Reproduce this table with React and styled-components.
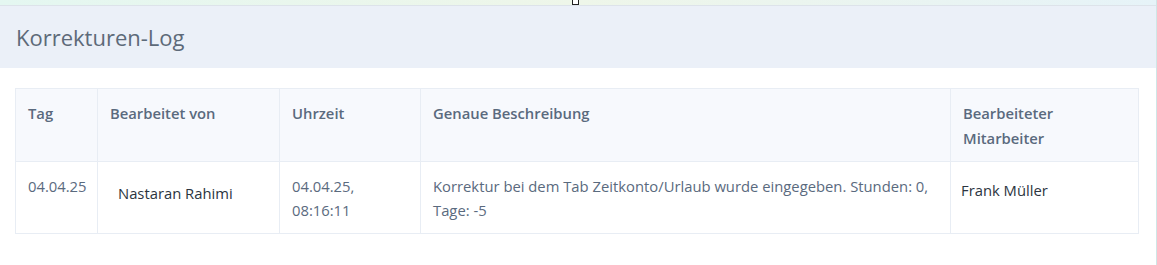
import React from "react"
import styled, { createGlobalStyle } from "styled-components"

const GlobalStyle = createGlobalStyle`
  body {
    margin: 0;
    background: #ffffff;
    font-family: "Open Sans", "Liberation Sans", sans-serif;
  }
`

const Page = styled.div`
  width: 1156px;
  height: 265px;
  border-right: 1px solid #cfe6e6;
  background: #ffffff;
`

const TopStrip = styled.div`
  position: relative;
  height: 5px;
  border-bottom: 1px solid #dde3ea;
  background: linear-gradient(90deg, #e4f7f1 0%, #eef6e9 50%, #e6f3f8 100%);
`

const Handle = styled.span`
  position: absolute;
  left: 572px;
  top: -2px;
  width: 5px;
  height: 5px;
  border: 1px solid #222;
  background: #fff;
`

const Header = styled.header`
  height: 62px;
  background: #ebf0f8;
  display: flex;
  align-items: center;
  padding: 0 16px;
`

const Title = styled.h1`
  margin: 0;
  font-size: 22px;
  font-weight: 400;
  color: #5d6a79;
`

const Content = styled.div`
  padding: 20px 18px 0 15px;
`

const Table = styled.table`
  width: 1123px;
  border-collapse: collapse;
  table-layout: fixed;
  font-size: 14.8px;
`

const Th = styled.th`
  box-sizing: border-box;
  width: ${({ $w }) => $w}px;
  background: #f7f9fd;
  border: 1px solid #e8edf4;
  padding: 12px 12px 10px 12px;
  text-align: left;
  vertical-align: top;
  font-weight: 600;
  color: #5a6a7e;
  line-height: 25px;
  height: 71px;
`

const Td = styled.td`
  box-sizing: border-box;
  border: 1px solid #e8edf4;
  padding: 12px 12px 11px 12px;
  vertical-align: top;
  color: #5a6a7e;
  line-height: 24px;
  height: 72px;
`

const Name = styled.span`
  display: inline-block;
  padding: ${({ $inset }) => ($inset ? "7px 0 0 8px" : "4px 0 0 0")};
  margin-left: ${({ $inset }) => ($inset ? "0" : "-2px")};
  color: #2b3440;
`

const App = () => (
  <Page>
    <GlobalStyle />
    <TopStrip>
      <Handle />
    </TopStrip>
    <Header>
      <Title>Korrekturen-Log</Title>
    </Header>
    <Content>
      <Table>
        <thead>
          <tr>
            <Th $w={82}>Tag</Th>
            <Th $w={182}>Bearbeitet von</Th>
            <Th $w={141}>Uhrzeit</Th>
            <Th $w={530}>Genaue Beschreibung</Th>
            <Th $w={188}>Bearbeiteter Mitarbeiter</Th>
          </tr>
        </thead>
        <tbody>
          <tr>
            <Td>04.04.25</Td>
            <Td>
              <Name $inset>Nastaran Rahimi</Name>
            </Td>
            <Td>
              04.04.25,
              <br />
              08:16:11
            </Td>
            <Td>
              Korrektur bei dem Tab Zeitkonto/Urlaub wurde eingegeben. Stunden: 0, Tage: -5
            </Td>
            <Td>
              <Name>Frank Müller</Name>
            </Td>
          </tr>
        </tbody>
      </Table>
    </Content>
  </Page>
)

export default App
